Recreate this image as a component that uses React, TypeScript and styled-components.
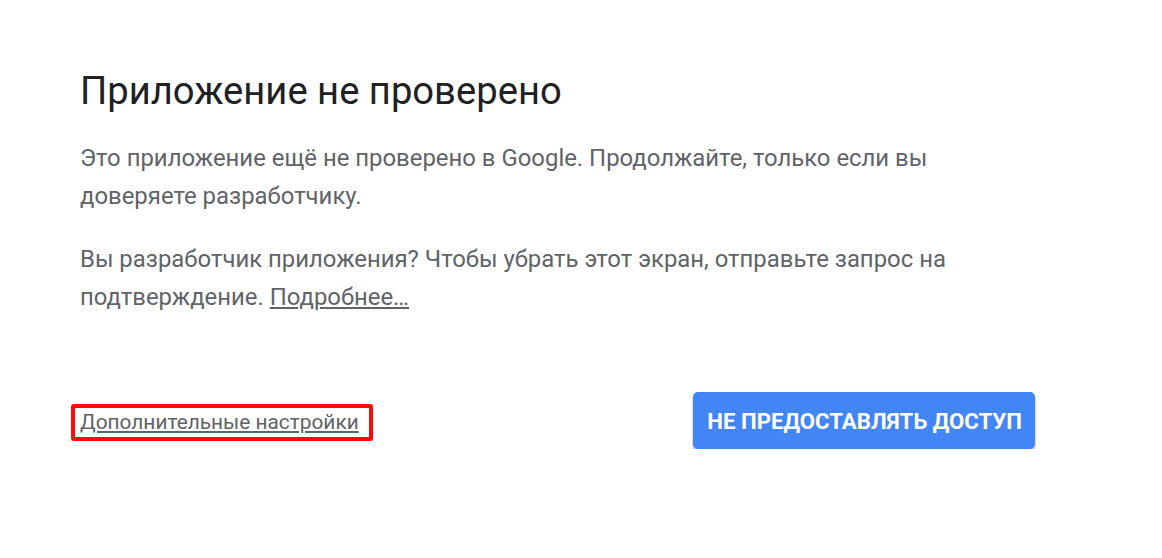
import React from "react";
import styled, { createGlobalStyle } from "styled-components";

const GlobalStyle = createGlobalStyle`
  html, body {
    margin: 0;
    padding: 0;
    background: #ffffff;
  }
  body {
    font-family: Roboto, "Liberation Sans", Arial, sans-serif;
  }
`;

const Page = styled.main`
  padding: 67px 0 0 80px;
`;

const Dialog = styled.section`
  width: 955px;
`;

const Title = styled.h1`
  margin: 0;
  font-size: 38.2px;
  line-height: 48px;
  font-weight: 400;
  color: #202124;
`;

const Paragraph = styled.p`
  margin: 24px 0 0;
  max-width: 905px;
  font-size: 23.9px;
  line-height: 38px;
  color: #606367;

  & + & {
    margin-top: 25px;
  }
`;

const TextLink = styled.a`
  color: #606367;
  text-decoration: underline;
  text-underline-offset: 2px;
  cursor: pointer;
`;

const Footer = styled.div`
  margin-top: 76px;
  display: flex;
  align-items: center;
  justify-content: space-between;
`;

const Highlight = styled.span`
  display: inline-flex;
  margin: 4px 0 0 -9px;
  padding: 4px 10px 4px 5px;
  border: 4px solid #ff0a0a;
  border-radius: 3px;
`;

const MoreLink = styled(TextLink)`
  font-size: 20.85px;
  line-height: 21px;
`;

const DenyButton = styled.button`
  height: 57px;
  padding: 0 13px 0 14px;
  border: none;
  border-radius: 5px;
  background: #4285f4;
  color: #ffffff;
  font-family: Roboto, "Liberation Sans", Arial, sans-serif;
  font-size: 22.2px;
  font-weight: 700;
  text-transform: uppercase;
  box-shadow: 0 2px 3px rgba(0, 0, 0, 0.3);
  cursor: pointer;
`;

export default function App() {
  return (
    <>
      <GlobalStyle />
      <Page>
        <Dialog>
          <Title>Приложение не проверено</Title>
          <Paragraph>
            Это приложение ещё не проверено в Google. Продолжайте, только если вы
            доверяете разработчику.
          </Paragraph>
          <Paragraph>
            Вы разработчик приложения? Чтобы убрать этот экран, отправьте запрос на
            подтверждение. <TextLink>Подробнее…</TextLink>
          </Paragraph>
          <Footer>
            <Highlight>
              <MoreLink>Дополнительные настройки</MoreLink>
            </Highlight>
            <DenyButton>Не предоставлять доступ</DenyButton>
          </Footer>
        </Dialog>
      </Page>
    </>
  );
}
